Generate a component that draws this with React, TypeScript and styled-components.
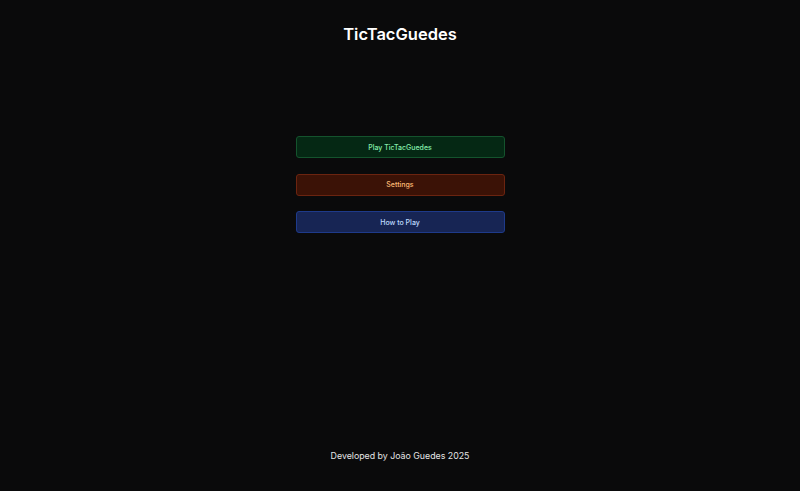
import React from "react";
import styled, { createGlobalStyle } from "styled-components";

const GlobalStyle = createGlobalStyle`
  html, body {
    margin: 0;
    padding: 0;
    background: #0a0a0b;
    font-family: Inter, "Noto Sans", sans-serif;
  }
`;

type Variant = "green" | "orange" | "blue";

const palette: Record<Variant, { bg: string; border: string; text: string }> = {
  green: { bg: "#052814", border: "#14532d", text: "#86efac" },
  orange: { bg: "#3b1206", border: "#6b2410", text: "#fdba74" },
  blue: { bg: "#172554", border: "#1e3a8a", text: "#bfdbfe" },
};

function App() {
  return (
    <Page>
      <GlobalStyle />
      <Title>TicTacGuedes</Title>
      <Menu>
        <MenuButton $variant="green">Play TicTacGuedes</MenuButton>
        <MenuButton $variant="orange">Settings</MenuButton>
        <MenuButton $variant="blue">How to Play</MenuButton>
      </Menu>
      <Footer>Developed by João Guedes 2025</Footer>
    </Page>
  );
}

const Page = styled.div`
  display: flex;
  flex-direction: column;
  align-items: center;
  height: 100vh;
  box-sizing: border-box;
  padding: 23px 0 29px;
`;

const Title = styled.h1`
  margin: 0;
  font-size: 16.5px;
  font-weight: 600;
  line-height: 22px;
  color: #ffffff;
`;

const Menu = styled.div`
  display: flex;
  flex-direction: column;
  gap: 15.5px;
  width: 209px;
  margin-top: 91px;
`;

const MenuButton = styled.button<{ $variant: Variant }>`
  height: 22px;
  padding: 0;
  border-radius: 3px;
  border: 1px solid ${(p) => palette[p.$variant].border};
  background: ${(p) => palette[p.$variant].bg};
  color: ${(p) => palette[p.$variant].text};
  font-family: inherit;
  font-size: 7px;
  font-weight: 500;
  cursor: pointer;
`;

const Footer = styled.footer`
  margin-top: auto;
  font-size: 8.8px;
  line-height: 12px;
  color: #e5e5e5;
`;

export default App;
